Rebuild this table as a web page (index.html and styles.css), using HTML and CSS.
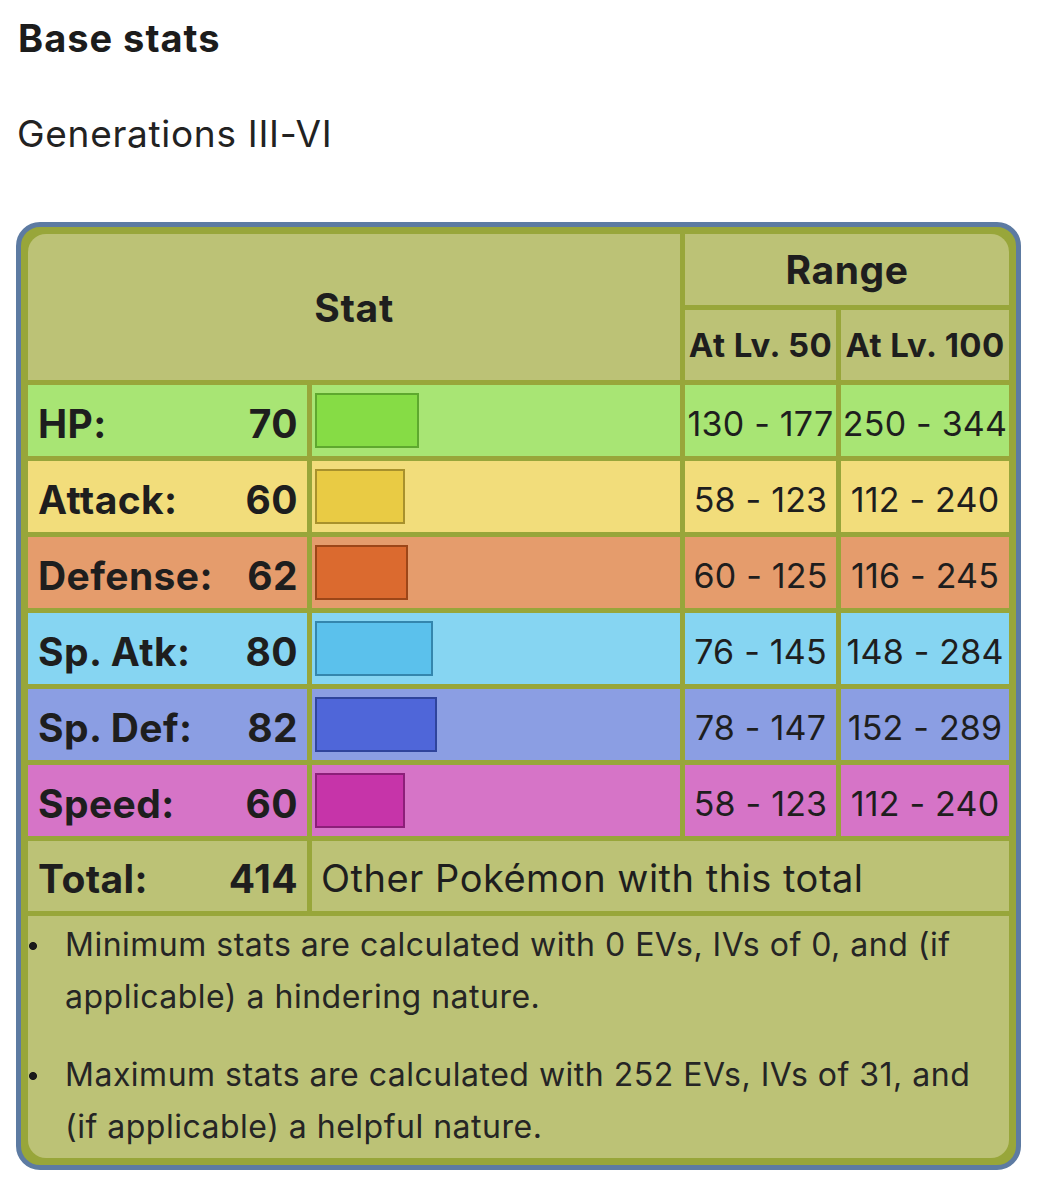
FILE: index.html
```html
<!DOCTYPE html>
<html lang="en">
<head>
<meta charset="utf-8">
<title>Base stats</title>
<link rel="stylesheet" href="styles.css">
</head>
<body>
<main class="page">
  <h2 class="title">Base stats</h2>
  <p class="gen">Generations III-VI</p>
  <div class="stats-box">
    <table class="stats">
      <colgroup>
        <col class="c-label"><col class="c-bar"><col class="c-l50"><col class="c-l100">
      </colgroup>
      <thead>
        <tr class="h1">
          <th class="stat-head" colspan="2" rowspan="2">Stat</th>
          <th class="range-head" colspan="2">Range</th>
        </tr>
        <tr class="h2">
          <th class="lv">At Lv. 50</th>
          <th class="lv">At Lv. 100</th>
        </tr>
      </thead>
      <tbody>
        <tr class="row hp">
          <td class="label"><div class="lv-pair"><span>HP:</span><span>70</span></div></td>
          <td class="barcell"><div class="bar" style="width:104px"></div></td>
          <td class="rng">130 - 177</td>
          <td class="rng">250 - 344</td>
        </tr>
        <tr class="row atk">
          <td class="label"><div class="lv-pair"><span>Attack:</span><span>60</span></div></td>
          <td class="barcell"><div class="bar" style="width:90px"></div></td>
          <td class="rng">58 - 123</td>
          <td class="rng">112 - 240</td>
        </tr>
        <tr class="row def">
          <td class="label"><div class="lv-pair"><span>Defense:</span><span>62</span></div></td>
          <td class="barcell"><div class="bar" style="width:93px"></div></td>
          <td class="rng">60 - 125</td>
          <td class="rng">116 - 245</td>
        </tr>
        <tr class="row spa">
          <td class="label"><div class="lv-pair"><span>Sp. Atk:</span><span>80</span></div></td>
          <td class="barcell"><div class="bar" style="width:118px"></div></td>
          <td class="rng">76 - 145</td>
          <td class="rng">148 - 284</td>
        </tr>
        <tr class="row spd">
          <td class="label"><div class="lv-pair"><span>Sp. Def:</span><span>82</span></div></td>
          <td class="barcell"><div class="bar" style="width:122px"></div></td>
          <td class="rng">78 - 147</td>
          <td class="rng">152 - 289</td>
        </tr>
        <tr class="row spe">
          <td class="label"><div class="lv-pair"><span>Speed:</span><span>60</span></div></td>
          <td class="barcell"><div class="bar" style="width:90px"></div></td>
          <td class="rng">58 - 123</td>
          <td class="rng">112 - 240</td>
        </tr>
        <tr class="row total">
          <td class="label"><div class="lv-pair"><span>Total:</span><span>414</span></div></td>
          <td class="other" colspan="3">Other Pokémon with this total</td>
        </tr>
        <tr class="notes-row">
          <td class="notes" colspan="4">
            <ul class="notes-list">
              <li>Minimum stats are calculated with 0 EVs, IVs of 0, and (if applicable) a hindering nature.</li>
              <li>Maximum stats are calculated with 252 EVs, IVs of 31, and (if applicable) a helpful nature.</li>
            </ul>
          </td>
        </tr>
      </tbody>
    </table>
  </div>
</main>
</body>
</html>
```
FILE: styles.css
```css
html, body {
  margin: 0;
  padding: 0;
  background: #ffffff;
}

body {
  font-family: Inter, "Noto Sans", "DejaVu Sans", sans-serif;
  color: #1e1e1e;
}

.page {
  padding: 18px 16px 0 16px;
}

.title {
  margin: 0 0 0 2px;
  font-size: 38px;
  line-height: 40px;
  font-weight: 700;
  letter-spacing: 1px;
  color: #1c1c1c;
}

.gen {
  margin: 54px 0 0 1px;
  font-size: 37px;
  line-height: 44px;
  font-weight: 400;
  letter-spacing: 0.7px;
  color: #222;
}

.stats-box {
  margin-top: 66px;
  width: 991px;
  border: 5px solid #5d7ba2;
  border-radius: 24px;
  background: #98a63a;
  padding: 2px;
}

.stats {
  width: 100%;
  table-layout: fixed;
  border-collapse: separate;
  border-spacing: 5px;
}

.c-label { width: 279px; }
.c-bar { width: 368px; }
.c-l50 { width: 151px; }
.c-l100 { width: 168px; }

.stats th,
.stats td {
  padding: 0;
  vertical-align: middle;
  box-sizing: border-box;
}

.stats th {
  background: #bcc276;
  font-weight: 700;
  color: #1e1e1e;
}

.stat-head {
  font-size: 39px;
  letter-spacing: 0.7px;
  border-top-left-radius: 18px;
}

.h1 th {
  height: 71px;
}

.h2 th {
  height: 70px;
}

.range-head {
  font-size: 39px;
  letter-spacing: 0.6px;
  border-top-right-radius: 18px;
}

.lv {
  font-size: 33px;
  letter-spacing: 0.4px;
  white-space: nowrap;
}

.row td {
  height: 71px;
}

.stats .label,
.stats .rng {
  padding-top: 5px;
}

.label {
  font-size: 39px;
  font-weight: 700;
  letter-spacing: 0.4px;
}

.lv-pair {
  display: flex;
  justify-content: space-between;
  padding: 0 9px 0 10px;
}

.stats .barcell {
  padding-left: 3px;
}

.bar {
  box-sizing: border-box;
  height: 55px;
  border: 2px solid;
}

.rng {
  text-align: center;
  font-size: 34px;
  letter-spacing: 0.2px;
  white-space: nowrap;
}

.hp td { background: #a8e574; }
.hp .bar { background: #86dc45; border-color: #5ea82e; }

.atk td { background: #f2dd7b; }
.atk .bar { background: #e9cb44; border-color: #a8912c; }

.def td { background: #e59c6c; }
.def .bar { background: #db6a2f; border-color: #9c4618; }

.spa td { background: #86d5f2; }
.spa .bar { background: #5bc1ec; border-color: #3486ad; }

.spd td { background: #8b9ee3; }
.spd .bar { background: #4f66d9; border-color: #2f449c; }

.spe td { background: #d674c7; }
.spe .bar { background: #c634a9; border-color: #8c1f79; }

.total td {
  background: #bcc276;
  height: 70px;
}

.stats .other {
  font-size: 38px;
  letter-spacing: 0.5px;
  padding-left: 9px;
  padding-top: 4px;
  white-space: nowrap;
}

.notes {
  background: #bcc276;
  height: 242px;
  border-bottom-left-radius: 18px;
  border-bottom-right-radius: 18px;
}

.stats .notes {
  vertical-align: top;
}

.notes-list {
  list-style: none;
  margin: 0;
  padding: 3px 10px 0 0;
  font-size: 32px;
  letter-spacing: 0.5px;
  line-height: 52px;
  color: #252525;
}

.notes-list li {
  padding-left: 37px;
  background-image: radial-gradient(circle, #1a1a1a 0, #1a1a1a 3.6px, transparent 4.4px);
  background-repeat: no-repeat;
  background-size: 10px 10px;
  background-position: 0 22px;
}

.notes-list li + li {
  margin-top: 26px;
}
```
